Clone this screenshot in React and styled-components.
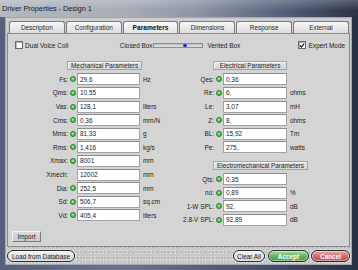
import React from "react";
import styled, { createGlobalStyle, css } from "styled-components";

const GlobalStyle = createGlobalStyle`
  html, body { margin: 0; padding: 0; width: 358px; height: 270px; overflow: hidden; background: #3a4256; }
  body { font-family: "Liberation Sans", Arial, sans-serif; font-size: 6.4px; color: #222; }
  * { box-sizing: border-box; }
`;

const Window = styled.div`
  width: 358px;
  height: 270px;
  display: flex;
  flex-direction: column;
  background: linear-gradient(to right, #56607a 0%, #6a7490 35%, #4a5470 70%, #283044 100%);
`;

const TitleBar = styled.div`
  height: 17px;
  flex: none;
  display: flex;
  align-items: center;
  padding: 0 0 1px 2px;
  background:
    linear-gradient(to bottom, rgba(255, 255, 255, 0.22), rgba(255, 255, 255, 0) 60%),
    linear-gradient(to right, #b4b8c0 0%, #a8acb6 35%, #8c94a6 55%, #58627c 78%, #2a3246 100%);
`;

const Title = styled.span`
  font-size: 7.4px;
  color: #1c1e2a;
  letter-spacing: -0.05px;
`;

const Body = styled.div`
  flex: 1;
  margin: 0 6px 5px 5px;
  border: 1px solid #a4a8b2;
  padding: 3px 1px 2px 1px;
  display: flex;
  flex-direction: column;
  background-color: #c8c8c8;
  background-image:
    radial-gradient(rgba(255, 255, 255, 0.45) 0.5px, transparent 0.9px),
    radial-gradient(rgba(0, 0, 0, 0.13) 0.5px, transparent 0.9px),
    radial-gradient(rgba(255, 255, 255, 0.3) 0.5px, transparent 0.9px);
  background-size: 3px 3px, 4px 5px, 5px 4px;
  background-position: 0 0, 1px 2px, 2px 1px;
`;

const TabStrip = styled.div`
  height: 12px;
  flex: none;
  display: flex;
  gap: 1px;
  padding: 0 1px 0 2px;
  position: relative;
  z-index: 1;
`;

const Tab = styled.div`
  flex: 1;
  display: flex;
  align-items: center;
  justify-content: center;
  border: 1px solid #7e7e7e;
  border-bottom: none;
  border-radius: 3px 3px 0 0;
  background: linear-gradient(to bottom, #f6f6f6, #dedede);
  color: #2a2a2a;
  ${(p) =>
    p.$active &&
    css`
      font-weight: bold;
      font-size: 6.6px;
      background: linear-gradient(to bottom, #fafafa, #e4e4e4);
      color: #111;
    `}
`;

const Panel = styled.div`
  height: 214px;
  flex: none;
  border: 1px solid #8a8a8a;
  background: #d4d4d4;
  display: flex;
  flex-direction: column;
  padding-top: 6px;
`;

const OptionsRow = styled.div`
  height: 10px;
  display: grid;
  grid-template-columns: 1fr auto 1fr;
  align-items: center;
  padding: 0 4px 0 7px;
`;

const OptionGroup = styled.div`
  display: flex;
  align-items: center;
  gap: ${(p) => p.$gap || 2}px;
  justify-self: ${(p) => p.$justify || "start"};
`;

const CheckBox = styled.span`
  width: 8px;
  height: 8px;
  background: #fff;
  border: 1px solid #6a6a6a;
  box-shadow: inset 1px 1px 0 #b8b8b8;
  display: flex;
  align-items: center;
  justify-content: center;
`;

const OptionText = styled.span`
  color: #222;
  white-space: nowrap;
`;

const SliderTrack = styled.div`
  width: 50px;
  height: 5px;
  position: relative;
  border: 1px solid #8c8c8c;
  background: linear-gradient(to bottom, #bdbdbd, #e6e6e6);
  margin-right: 3px;
`;

const SliderThumb = styled.span`
  position: absolute;
  left: 29px;
  top: 0px;
  width: 4px;
  height: 3px;
  border-radius: 50%;
  background: #1426c8;
`;

const Columns = styled.div`
  display: grid;
  grid-template-columns: 160px auto;
  align-items: start;
  padding-left: 8px;
  margin-top: 11px;
`;

const Stack = styled.div`
  display: flex;
  flex-direction: column;
`;

const Group = styled.div`
  display: flex;
  flex-direction: column;
  gap: ${(p) => p.$gap}px;
  margin-top: ${(p) => p.$top || 0}px;
`;

const GroupHeader = styled.div`
  align-self: flex-start;
  height: 9px;
  min-width: 74px;
  margin-left: ${(p) => p.$offset}px;
  margin-bottom: ${(p) => p.$below}px;
  padding: 0 3px;
  display: flex;
  align-items: center;
  justify-content: center;
  white-space: nowrap;
  color: #2a2a2a;
  background: linear-gradient(to bottom, #e4e4e4, #d6d6d6);
  border: 1px solid #a6a6a6;
  box-shadow: inset 1px 1px 0 #f4f4f4;
`;

const Row = styled.div`
  height: 12px;
  display: grid;
  grid-template-columns: ${(p) => p.$labelW}px 8px ${(p) => p.$inputW}px auto;
  align-items: center;
`;

const Label = styled.span`
  text-align: right;
  padding-right: 1px;
  white-space: nowrap;
  color: #222;
`;

const Led = styled.span`
  justify-self: end;
  margin-right: 1px;
  width: 6px;
  height: 6px;
  border-radius: 50%;
  border: 1px solid #2c7a2c;
  background: radial-gradient(circle at 45% 40%, #b6f5b0 0, #58cf50 45%, #2fa52f 100%);
`;

const Field = styled.div`
  height: 12px;
  background: #fff;
  border: 1px solid #a2a2a2;
  border-top-color: #8c8c8c;
  padding-left: 2px;
  display: flex;
  align-items: center;
  color: #222;
  white-space: nowrap;
`;

const Unit = styled.span`
  padding-left: 3px;
  white-space: nowrap;
  color: #222;
`;

const ImportButton = styled.div`
  margin: auto 0 4px 4px;
  width: 29px;
  height: 11px;
  display: flex;
  align-items: center;
  justify-content: center;
  background: linear-gradient(to bottom, #dcdcdc, #cacaca);
  border: 1px solid;
  border-color: #f2f2f2 #7c7c7c #7c7c7c #f2f2f2;
  color: #222;
`;

const Footer = styled.div`
  height: 12px;
  margin-top: 3px;
  flex: none;
  display: flex;
  align-items: stretch;
`;

const pillVariants = {
  plain: css`
    background: linear-gradient(to bottom, #f6f6f6, #cfcfcf);
    color: #1e1e1e;
  `,
  accept: css`
    background: linear-gradient(to bottom, #a6dca6, #5cae5c 60%, #4f9f4f);
    color: #fff;
    font-weight: bold;
  `,
  cancel: css`
    background: linear-gradient(to bottom, #eeaaaa, #cc6464 60%, #bc5454);
    color: #fff;
    font-weight: bold;
  `,
};

const Pill = styled.div`
  width: ${(p) => p.$w}px;
  margin-left: ${(p) => p.$ml || 0}px;
  border: 1.5px solid #2a2a2a;
  border-radius: 6px;
  box-shadow: inset 0 0 0 0.6px rgba(255, 255, 255, 0.85), 0 0 0 0.6px rgba(255, 255, 255, 0.6);
  display: flex;
  align-items: center;
  justify-content: center;
  white-space: nowrap;
  ${(p) => pillVariants[p.$variant || "plain"]}
`;

const Spacer = styled.div`
  flex: 1;
`;

const tabs = ["Description", "Configuration", "Parameters", "Dimensions", "Response", "External"];

const mechanical = [
  ["Fs:", true, "29,6", "Hz"],
  ["Qms:", true, "10,55", ""],
  ["Vas:", true, "128,1", "liters"],
  ["Cms:", true, "0,36", "mm/N"],
  ["Mms:", true, "81,33", "g"],
  ["Rms:", true, "1,416", "kg/s"],
  ["Xmax:", true, "8001", "mm"],
  ["Xmech:", false, "12002", "mm"],
  ["Dia:", true, "252,5", "mm"],
  ["Sd:", true, "506,7", "sq.cm"],
  ["Vd:", true, "405,4", "liters"],
];

const electrical = [
  ["Qes:", true, "0,36", ""],
  ["Re:", true, "6,", "ohms"],
  ["Le:", false, "3,07", "mH"],
  ["Z:", true, "8,", "ohms"],
  ["BL:", true, "15,92", "Tm"],
  ["Pe:", false, "275,", "watts"],
];

const electromech = [
  ["Qts:", true, "0,35", ""],
  ["no:", true, "0,89", "%"],
  ["1-W SPL:", true, "92,", "dB"],
  ["2.8-V SPL:", true, "92,89", "dB"],
];

function ParamRows({ rows, labelW, inputW }) {
  return rows.map(([label, led, value, unit]) => (
    <Row key={label} $labelW={labelW} $inputW={inputW}>
      <Label>{label}</Label>
      {led ? <Led /> : <span />}
      <Field>{value}</Field>
      <Unit>{unit}</Unit>
    </Row>
  ));
}

function Check() {
  return (
    <svg width="7" height="7" viewBox="0 0 7 7">
      <path d="M1 3.4 L2.8 5.4 L6 1.2" fill="none" stroke="#111" strokeWidth="1.4" />
    </svg>
  );
}

export default function App() {
  return (
    <>
      <GlobalStyle />
      <Window>
        <TitleBar>
          <Title>Driver Properties - Design 1</Title>
        </TitleBar>
        <Body>
          <TabStrip>
            {tabs.map((t) => (
              <Tab key={t} $active={t === "Parameters"}>
                {t}
              </Tab>
            ))}
          </TabStrip>
          <Panel>
            <OptionsRow>
              <OptionGroup $gap={2}>
                <CheckBox />
                <OptionText>Dual Voice Coil</OptionText>
              </OptionGroup>
              <OptionGroup $gap={1}>
                <OptionText>Closed Box</OptionText>
                <SliderTrack>
                  <SliderThumb />
                </SliderTrack>
                <OptionText>Vented Box</OptionText>
              </OptionGroup>
              <OptionGroup $gap={3} $justify="end">
                <CheckBox>
                  <Check />
                </CheckBox>
                <OptionText>Expert Mode</OptionText>
              </OptionGroup>
            </OptionsRow>
            <Columns>
              <Group $gap={1.6}>
                <GroupHeader $offset={51} $below={1.8}>Mechanical Parameters</GroupHeader>
                <ParamRows rows={mechanical} labelW={53} inputW={63} />
              </Group>
              <Stack>
                <Group $gap={1.6}>
                  <GroupHeader $offset={37} $below={1.8}>Electrical Parameters</GroupHeader>
                  <ParamRows rows={electrical} labelW={39} inputW={64} />
                </Group>
                <Group $gap={1.45} $top={7.6}>
                  <GroupHeader $offset={37} $below={2}>Electromechanical Parameters</GroupHeader>
                  <ParamRows rows={electromech} labelW={39} inputW={64} />
                </Group>
              </Stack>
            </Columns>
            <ImportButton>Import</ImportButton>
          </Panel>
          <Footer>
            <Pill $w={68}>Load from Database</Pill>
            <Spacer />
            <Pill $w={32}>Clear All</Pill>
            <Pill $w={41} $ml={3} $variant="accept">Accept</Pill>
            <Pill $w={39} $ml={2} $variant="cancel">Cancel</Pill>
          </Footer>
        </Body>
      </Window>
    </>
  );
}
